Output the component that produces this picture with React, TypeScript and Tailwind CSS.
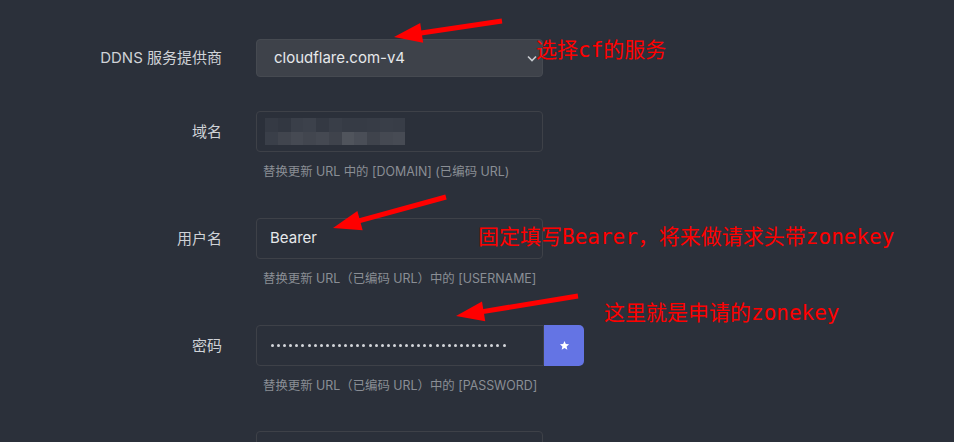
import React from "react";

const blurTop = ["#353a44", "#323741", "#3a3f49", "#3c414b", "#343943", "#393e48", "#363b45", "#363b45", "#373c46", "#393e48", "#383d47"];
const blurBottom = ["#3a3f49", "#41454e", "#464a53", "#42464f", "#454952", "#3f434c", "#50545c", "#4a4e57", "#3f434c", "#454952", "#474b54"];

function Label({ children }: { children: React.ReactNode }) {
  return (
    <div className="w-[222px] shrink-0 text-right text-[15px] text-[#cfd2d7] leading-5">{children}</div>
  );
}

function Help({ children }: { children: React.ReactNode }) {
  return <p className="mt-[12px] pl-[7px] text-[12.4px] leading-4 text-[#8a8e95] whitespace-nowrap">{children}</p>;
}

function Arrow({ x1, y1, x2, y2 }: { x1: number; y1: number; x2: number; y2: number }) {
  // line from tail (x1,y1) to tip (x2,y2), with filled head
  const dx = x2 - x1;
  const dy = y2 - y1;
  const len = Math.hypot(dx, dy);
  const ux = dx / len;
  const uy = dy / len;
  const hl = 28;
  const hw = 10;
  const bx = x2 - ux * hl;
  const by = y2 - uy * hl;
  const head = `${x2},${y2} ${bx - uy * hw},${by + ux * hw} ${bx + uy * hw},${by - ux * hw}`;
  return (
    <g>
      <line x1={x1} y1={y1} x2={bx + ux * 4} y2={by + uy * 4} stroke="#ff0000" strokeWidth={5} strokeLinecap="butt" />
      <polygon points={head} fill="#ff0000" />
    </g>
  );
}

export default function App() {
  return (
    <div
      className="relative w-[954px] h-[442px] overflow-hidden bg-[#2b303a]"
      style={{ fontFamily: '"Inter", "Noto Sans CJK SC", sans-serif' }}
    >
      <div className="flex flex-col pt-[39px]">
        {/* provider */}
        <div className="flex items-center gap-[34px]">
          <Label>DDNS 服务提供商</Label>
          <div className="relative w-[287px] h-[38px] rounded-[4px] bg-[#3e424a] border border-[#464a51] flex items-center pl-[17px]">
            <span className="text-[15px] text-[#e6e8eb]">cloudflare.com-v4</span>
            <svg className="absolute right-[5px] top-[15px]" width="10" height="7" viewBox="0 0 10 7">
              <path d="M1 1.5 L5 5.5 L9 1.5" fill="none" stroke="#c9ccd1" strokeWidth="1.6" />
            </svg>
          </div>
        </div>

        {/* domain */}
        <div className="flex items-start gap-[34px] mt-[34px]">
          <div className="h-[41px] flex items-center">
            <Label>域名</Label>
          </div>
          <div className="w-[287px]">
            <div className="h-[41px] rounded-[4px] border border-[#3e4148] flex items-center pl-[8px]">
              <div className="flex flex-col">
                <div className="flex">
                  {blurTop.map((c, i) => (
                    <div key={i} className="w-[12.75px] h-[14px]" style={{ backgroundColor: c }} />
                  ))}
                </div>
                <div className="flex">
                  {blurBottom.map((c, i) => (
                    <div key={i} className="w-[12.75px] h-[13px]" style={{ backgroundColor: c }} />
                  ))}
                </div>
              </div>
            </div>
            <Help>替换更新 URL 中的 [DOMAIN] (已编码 URL)</Help>
          </div>
        </div>

        {/* username */}
        <div className="flex items-start gap-[34px] mt-[38px]">
          <div className="h-[41px] flex items-center">
            <Label>用户名</Label>
          </div>
          <div className="w-[287px]">
            <div className="h-[41px] rounded-[4px] border border-[#3e4148] flex items-center pl-[13px]">
              <span className="text-[15px] text-[#e6e8eb]">Bearer</span>
            </div>
            <Help>替换更新 URL（已编码 URL）中的 [USERNAME]</Help>
          </div>
        </div>

        {/* password */}
        <div className="flex items-start gap-[34px] mt-[38px]">
          <div className="h-[41px] flex items-center">
            <Label>密码</Label>
          </div>
          <div className="w-[328px]">
            <div className="flex h-[41px]">
              <div className="w-[288px] rounded-l-[4px] border border-[#3e4148] flex items-center pl-[14px] gap-[3.1px]">
                {Array.from({ length: 39 }).map((_, i) => (
                  <span key={i} className="w-[3px] h-[3px] rounded-full bg-[#d4d6da]" />
                ))}
              </div>
              <button className="w-[40px] h-[41px] rounded-r-[5px] bg-[#6474e4] flex items-center justify-center">
                <svg width="11" height="11" viewBox="0 0 24 24">
                  <path d="M12 2 L14.9 8.6 L22 9.3 L16.6 14 L18.2 21 L12 17.3 L5.8 21 L7.4 14 L2 9.3 L9.1 8.6 Z" fill="#ffffff" />
                </svg>
              </button>
            </div>
            <Help>替换更新 URL（已编码 URL）中的 [PASSWORD]</Help>
          </div>
        </div>

        {/* next field, cut off */}
        <div className="flex items-start gap-[34px] mt-[37px]">
          <div className="w-[222px] shrink-0" />
          <div className="w-[287px] h-[41px] rounded-[4px] border border-[#3e4148]" />
        </div>
      </div>

      {/* annotations */}
      <svg className="absolute inset-0 pointer-events-none" width="954" height="442">
        <Arrow x1={502} y1={21} x2={394} y2={37} />
        <Arrow x1={446} y1={197} x2={333} y2={228} />
        <Arrow x1={578} y1={296} x2={456} y2={316} />
      </svg>
      <div
        className="absolute left-[536px] top-[36px] text-[21px] leading-7 text-[#ff0000] whitespace-nowrap"
        style={{ fontFamily: '"DejaVu Sans Mono", "Noto Sans CJK SC", monospace' }}
      >
        选择cf的服务
      </div>
      <div
        className="absolute left-[478px] top-[223px] text-[21px] leading-7 text-[#ff0000] whitespace-nowrap"
        style={{ fontFamily: '"DejaVu Sans Mono", "Noto Sans CJK SC", monospace' }}
      >
        固定填写Bearer，将来做请求头带zonekey
      </div>
      <div
        className="absolute left-[604px] top-[299px] text-[21px] leading-7 text-[#ff0000] whitespace-nowrap"
        style={{ fontFamily: '"DejaVu Sans Mono", "Noto Sans CJK SC", monospace' }}
      >
        这里就是申请的zonekey
      </div>
    </div>
  );
}
